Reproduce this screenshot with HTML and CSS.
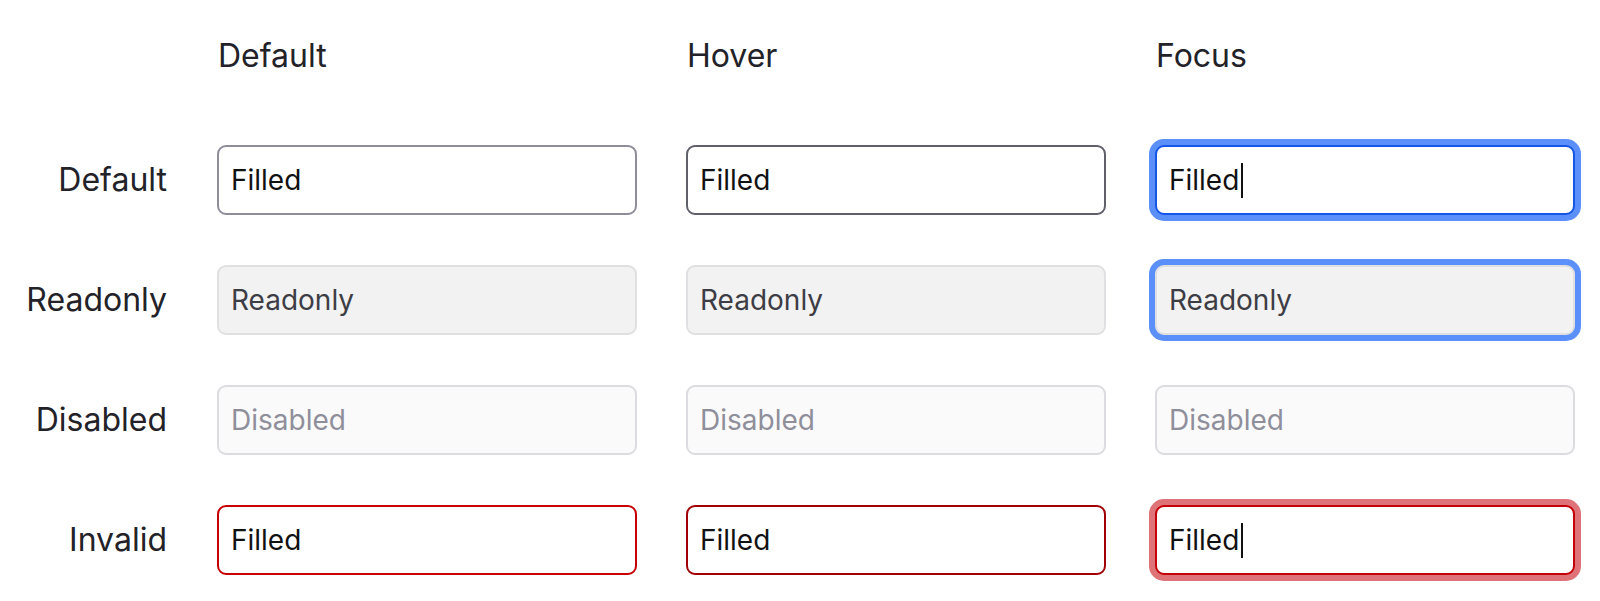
FILE: index.html
```html
<!DOCTYPE html>
<html lang="en">
<head>
<meta charset="utf-8">
<title>Input states</title>
<link rel="stylesheet" href="styles.css">
</head>
<body>
<div class="matrix">
  <div class="corner"></div>
  <div class="col-head">Default</div>
  <div class="col-head">Hover</div>
  <div class="col-head">Focus</div>

  <div class="row-head">Default</div>
  <div class="field"><span class="value">Filled</span></div>
  <div class="field hover"><span class="value">Filled</span></div>
  <div class="field focus"><span class="value">Filled</span><span class="caret"></span></div>

  <div class="row-head">Readonly</div>
  <div class="field readonly"><span class="value">Readonly</span></div>
  <div class="field readonly"><span class="value">Readonly</span></div>
  <div class="field readonly focus-ring"><span class="value">Readonly</span></div>

  <div class="row-head">Disabled</div>
  <div class="field disabled"><span class="value">Disabled</span></div>
  <div class="field disabled"><span class="value">Disabled</span></div>
  <div class="field disabled"><span class="value">Disabled</span></div>

  <div class="row-head">Invalid</div>
  <div class="field invalid"><span class="value">Filled</span></div>
  <div class="field invalid hover-invalid"><span class="value">Filled</span></div>
  <div class="field invalid focus-invalid"><span class="value">Filled</span><span class="caret"></span></div>
</div>
</body>
</html>
```

FILE: styles.css
```css
html, body {
  margin: 0;
  padding: 0;
  background: #ffffff;
}

body {
  font-family: Inter, "Liberation Sans", sans-serif;
  color: #202025;
  min-height: 601px;
}

.matrix {
  display: grid;
  grid-template-columns: 168px 420px 420px 420px;
  grid-template-rows: 59px repeat(4, 70px);
  column-gap: 49px;
  row-gap: 50px;
  padding-top: 36px;
  padding-bottom: 26px;
}

.col-head {
  font-size: 32px;
  line-height: 40px;
  color: #222228;
  padding-left: 1px;
}

.row-head {
  font-size: 32px;
  line-height: 40px;
  color: #222228;
  text-align: right;
  align-self: center;
  padding-right: 1px;
}

.field {
  box-sizing: border-box;
  height: 70px;
  border: 2px solid #8e8e9a;
  border-radius: 9px;
  background: #ffffff;
  display: flex;
  align-items: center;
  padding: 0 12px;
  font-size: 28px;
  color: #111114;
}

.field.hover {
  border-color: #60606c;
}

.field.focus {
  border-color: #1656e6;
  box-shadow: 0 0 0 6px #5b8ff9;
}

.field.readonly {
  background: #f2f2f2;
  border-color: #e0e0e3;
  color: #3d3d45;
}

.field.focus-ring {
  box-shadow: 0 0 0 6px #5b8ff9;
}

.field.disabled {
  background: #fafafa;
  border-color: #dcdce0;
  color: #8f8f9b;
}

.field.invalid {
  border-color: #c70008;
}

.field.hover-invalid {
  border-color: #a10006;
}

.field.focus-invalid {
  border-color: #c40008;
  box-shadow: 0 0 0 6px #de7477;
}

.caret {
  display: inline-block;
  width: 2px;
  height: 35px;
  background: #111114;
  margin-left: 2px;
}
```
